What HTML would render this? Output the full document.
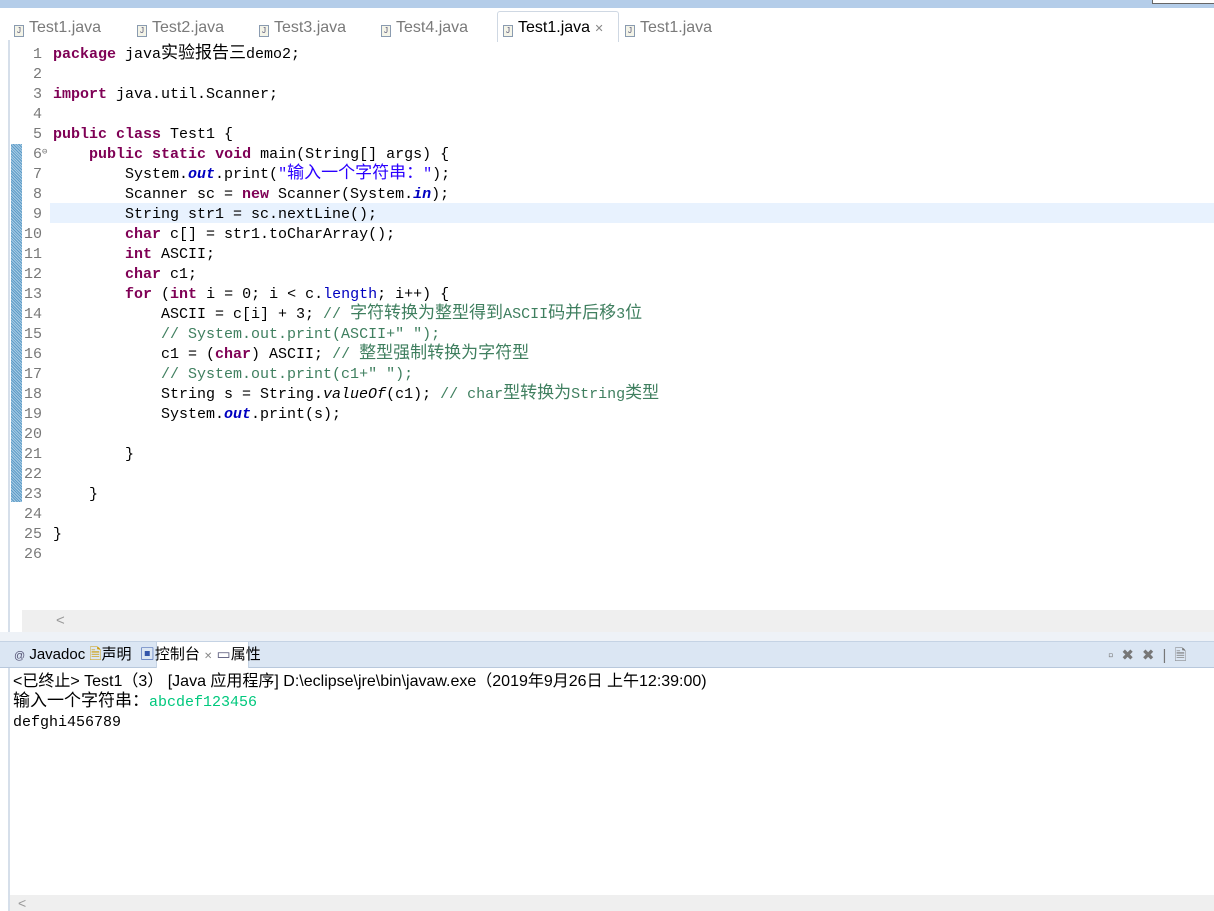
<!DOCTYPE html>
<html><head><meta charset="utf-8"><style>
*{margin:0;padding:0;box-sizing:border-box}
body{width:1214px;height:911px;overflow:hidden;background:#fff;position:relative;font-family:"Liberation Sans","Noto Sans CJK SC",sans-serif}
.abs{position:absolute}
.code{font-family:"Liberation Mono","Noto Sans CJK SC",monospace;font-size:15px;white-space:pre;color:#000}
.cj{font-size:17px;font-family:"Noto Sans CJK SC",sans-serif;line-height:0}
.ln{position:absolute;left:22px;width:20px;text-align:right;font-family:"Liberation Mono",monospace;font-size:15px;color:#787878;line-height:20px}
.l{position:absolute;left:53px;line-height:20px;height:20px}
.k{color:#7f0055;font-weight:bold}
.s{color:#2a00ff}
.c{color:#3f7f5f}
.f{color:#0000c0;font-weight:bold;font-style:italic}
.fn{color:#0000c0}
.i{font-style:italic}
.tab{position:absolute;top:17px;font-size:16px;color:#7a7a7a;line-height:22px}
.ic{display:inline-block;width:10px;height:12px;border:1px solid #8a9bb0;background:#f4f4e8;vertical-align:-1px;margin-right:5px;font-size:8px;line-height:10px;text-align:center;color:#557}
</style></head><body>
<div class="abs" style="left:0;top:0;width:1214px;height:8px;background:#b4cde9"></div>
<div class="abs" style="left:1152px;top:0;width:62px;height:4px;background:#fff;border-left:1px solid #666;border-bottom:1px solid #666"></div>
<div class="abs" style="left:497px;top:11px;width:122px;height:31px;background:#fff;border:1px solid #cfd8e3;border-bottom:none;border-radius:3px 3px 0 0"></div>
<div class="tab" style="left:14px"><span class="ic">J</span>Test1.java</div>
<div class="tab" style="left:137px"><span class="ic">J</span>Test2.java</div>
<div class="tab" style="left:259px"><span class="ic">J</span>Test3.java</div>
<div class="tab" style="left:381px"><span class="ic">J</span>Test4.java</div>
<div class="tab" style="left:503px;color:#000"><span class="ic">J</span>Test1.java <span style="font-size:11px;color:#888">✕</span></div>
<div class="tab" style="left:625px"><span class="ic">J</span>Test1.java</div>
<div class="abs" style="left:8px;top:40px;width:2px;height:598px;background:#d6dfea"></div>
<div class="abs" style="left:11px;top:144px;width:11px;height:358px;background:repeating-linear-gradient(45deg,#5d9cc7 0 1px,#a8cbe4 1px 2px)"></div>
<div class="abs" style="left:50px;top:203px;width:1164px;height:20px;background:#e8f2fe"></div>
<div class="code" style="position:absolute;left:0;top:1px">
<div class="ln" style="top:44px">1</div><div class="ln" style="top:64px">2</div><div class="ln" style="top:84px">3</div><div class="ln" style="top:104px">4</div><div class="ln" style="top:124px">5</div><div class="ln" style="top:144px">6<span style="font-size:9px;position:absolute;left:20px;top:-3px">⊖</span></div><div class="ln" style="top:164px">7</div><div class="ln" style="top:184px">8</div><div class="ln" style="top:204px">9</div><div class="ln" style="top:224px">10</div><div class="ln" style="top:244px">11</div><div class="ln" style="top:264px">12</div><div class="ln" style="top:284px">13</div><div class="ln" style="top:304px">14</div><div class="ln" style="top:324px">15</div><div class="ln" style="top:344px">16</div><div class="ln" style="top:364px">17</div><div class="ln" style="top:384px">18</div><div class="ln" style="top:404px">19</div><div class="ln" style="top:424px">20</div><div class="ln" style="top:444px">21</div><div class="ln" style="top:464px">22</div><div class="ln" style="top:484px">23</div><div class="ln" style="top:504px">24</div><div class="ln" style="top:524px">25</div><div class="ln" style="top:544px">26</div>
<div class="l" style="top:44px"><span class="k">package</span> java<span class="cj">实验报告三</span>demo2;</div>
<div class="l" style="top:84px"><span class="k">import</span> java.util.Scanner;</div>
<div class="l" style="top:124px"><span class="k">public</span> <span class="k">class</span> Test1 {</div>
<div class="l" style="top:144px">    <span class="k">public</span> <span class="k">static</span> <span class="k">void</span> main(String[] args) {</div>
<div class="l" style="top:164px">        System.<span class="f">out</span>.print(<span class="s">"<span class="cj">输入一个字符串：</span>"</span>);</div>
<div class="l" style="top:184px">        Scanner sc = <span class="k">new</span> Scanner(System.<span class="f">in</span>);</div>
<div class="l" style="top:204px">        String str1 = sc.nextLine();</div>
<div class="l" style="top:224px">        <span class="k">char</span> c[] = str1.toCharArray();</div>
<div class="l" style="top:244px">        <span class="k">int</span> ASCII;</div>
<div class="l" style="top:264px">        <span class="k">char</span> c1;</div>
<div class="l" style="top:284px">        <span class="k">for</span> (<span class="k">int</span> i = 0; i &lt; c.<span class="fn">length</span>; i++) {</div>
<div class="l" style="top:304px">            ASCII = c[i] + 3; <span class="c">// <span class="cj">字符转换为整型得到</span>ASCII<span class="cj">码并后移</span>3<span class="cj">位</span></span></div>
<div class="l" style="top:324px">            <span class="c">// System.out.print(ASCII+" ");</span></div>
<div class="l" style="top:344px">            c1 = (<span class="k">char</span>) ASCII; <span class="c">// <span class="cj">整型强制转换为字符型</span></span></div>
<div class="l" style="top:364px">            <span class="c">// System.out.print(c1+" ");</span></div>
<div class="l" style="top:384px">            String s = String.<span class="i">valueOf</span>(c1); <span class="c">// char<span class="cj">型转换为</span>String<span class="cj">类型</span></span></div>
<div class="l" style="top:404px">            System.<span class="f">out</span>.print(s);</div>
<div class="l" style="top:444px">        }</div>
<div class="l" style="top:484px">    }</div>
<div class="l" style="top:524px">}</div>
</div>
<div class="abs" style="left:22px;top:610px;width:1192px;height:22px;background:#efefef"></div>
<div class="abs" style="left:56px;top:612px;color:#999;font-size:15px">&lt;</div>
<div class="abs" style="left:0;top:632px;width:1214px;height:9px;background:#eef2f7"></div>
<div class="abs" style="left:0;top:641px;width:1214px;height:27px;background:#dbe6f3;border-top:1px solid #c5d3e4;border-bottom:1px solid #b8c8dc"></div>
<div class="abs" style="left:156px;top:641px;width:93px;height:27px;background:#fff;border:1px solid #c5d3e4;border-bottom:none"></div>
<div class="abs" style="left:14px;top:646px;font-size:15px;color:#000;line-height:18px;white-space:nowrap"><span style="font-size:11px;color:#557">@</span> Javadoc <span style="color:#c90">🗎</span>声明 &nbsp;<span style="color:#35a">▣</span>控制台 <span style="font-size:10px;color:#888">✕</span> <span style="color:#557">▭</span>属性</div>
<div class="abs" style="left:1108px;top:645px;font-size:15px;color:#777;letter-spacing:8px">▫✖✖|🗎</div>
<div class="abs" style="left:13px;top:672px;font-size:16px;line-height:20px;color:#000;white-space:nowrap">&lt;已终止&gt; Test1（3） [Java 应用程序] D:\eclipse\jre\bin\javaw.exe（2019年9月26日 上午12:39:00)</div>
<div class="abs code" style="left:13px;top:693px;line-height:20px;height:20px"><span class="cj">输入一个字符串：</span><span style="color:#00c87d">abcdef123456</span></div>
<div class="abs code" style="left:13px;top:713px;line-height:20px">defghi456789</div>
<div class="abs" style="left:8px;top:668px;width:2px;height:243px;background:#d6dfea"></div>
<div class="abs" style="left:10px;top:895px;width:1204px;height:16px;background:#efefef"></div>
<div class="abs" style="left:18px;top:895px;color:#999;font-size:14px">&lt;</div>
</body></html>
